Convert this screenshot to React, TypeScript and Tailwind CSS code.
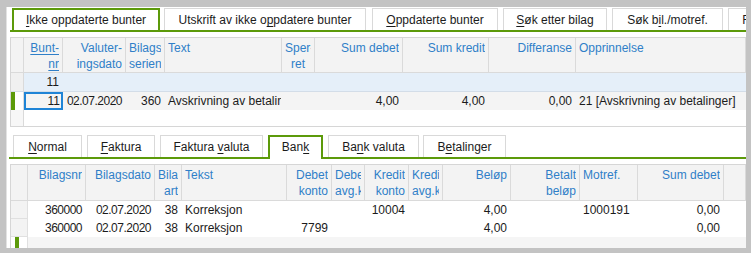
import React from 'react';

type Col = {
    w: string;
    head: string[];
    a: 'l' | 'r' | 'c';
    u?: boolean;
    tight?: boolean;
};

const alignCls = { l: 'text-left', r: 'text-right', c: 'text-center' };

const topCols: Col[] = [
    { w: 'w-[39px]', head: ['Bunt-', 'nr'], a: 'r', u: true },
    { w: 'w-[63px]', head: ['Valuter-', 'ingsdato'], a: 'r', tight: true },
    { w: 'w-[39px]', head: ['Bilags', 'serienr'], a: 'r' },
    { w: 'w-[117px]', head: ['Text'], a: 'l' },
    { w: 'w-[33px]', head: ['Sper-', 'ret'], a: 'c' },
    { w: 'w-[88px]', head: ['Sum debet'], a: 'r' },
    { w: 'w-[86px]', head: ['Sum kredit'], a: 'r' },
    { w: 'w-[87px]', head: ['Differanse'], a: 'r' },
    { w: 'flex-1', head: ['Opprinnelse'], a: 'l' },
];

const topRow = ['11', '02.07.2020', '360', 'Avskrivning av betalinger', '', '4,00', '4,00', '0,00', '21 [Avskrivning av betalinger]'];

const bankCols: Col[] = [
    { w: 'w-[58px]', head: ['Bilagsnr'], a: 'r', tight: true },
    { w: 'w-[69px]', head: ['Bilagsdato'], a: 'r', tight: true },
    { w: 'w-[27px]', head: ['Bilags', 'art'], a: 'r' },
    { w: 'w-[105px]', head: ['Tekst'], a: 'l' },
    { w: 'w-[45px]', head: ['Debet', 'konto'], a: 'r' },
    { w: 'w-[33px]', head: ['Debet', 'avg.kode'], a: 'r' },
    { w: 'w-[44px]', head: ['Kredit', 'konto'], a: 'r' },
    { w: 'w-[34px]', head: ['Kredit', 'avg.kode'], a: 'r' },
    { w: 'w-[68px]', head: ['Beløp'], a: 'r' },
    { w: 'w-[69px]', head: ['Betalt', 'beløp'], a: 'r' },
    { w: 'w-[58px]', head: ['Motref.'], a: 'l' },
    { w: 'w-[86px]', head: ['Sum debet'], a: 'r' },
    { w: 'flex-1', head: [''], a: 'l' },
];

const bankRows = [
    ['360000', '02.07.2020', '38', 'Korreksjon', '', '', '10004', '', '4,00', '', '1000191', '0,00', ''],
    ['360000', '02.07.2020', '38', 'Korreksjon', '7799', '', '', '', '4,00', '', '', '0,00', ''],
];

// hurtigtast-bokstav med understrek
const K = ({ children }: { children: React.ReactNode }) => <span className="underline underline-offset-2">{children}</span>;

const Tab = ({ w, ml, active, children }: { w: string; ml: string; active?: boolean; children: React.ReactNode }) =>
    active ? (
        <div className={`${w} ${ml} h-[24px] -mb-[2px] border-2 border-b-0 border-[#5c9a0a] bg-white pt-[2px] text-center leading-[16px] shrink-0 relative z-10`}>
            {children}
        </div>
    ) : (
        <div className={`${w} ${ml} h-[22px] border border-b-0 border-[#d9d9d9] bg-white pt-[3px] text-center leading-[16px] whitespace-nowrap shrink-0`}>
            {children}
        </div>
    );

const HeadCell = ({ col }: { col: Col }) => (
    <div className={`${col.w} h-full border-r border-[#dadada] px-[3px] pt-[2px] overflow-hidden ${alignCls[col.a]} shrink-0`}>
        {col.head.map((l, i) => (
            <div key={i} className={`leading-[16px] whitespace-nowrap overflow-hidden ${col.u ? 'underline underline-offset-2' : ''}`}>
                {l}
            </div>
        ))}
    </div>
);

const DataCell = ({ col, v }: { col: Col; v: string }) => (
    <div className={`${col.w} h-full border-r border-transparent px-[3px] overflow-hidden whitespace-nowrap ${alignCls[col.a]} ${col.tight ? 'tracking-[-0.5px]' : ''} shrink-0`}>
        {v}
    </div>
);

export default function App() {
    return (
        <div
            className="w-[751px] h-[253px] bg-[#c3c3c3] pt-[7px] pl-[6px] pr-[5px] pb-[5px] text-[12px] text-[#1b1b1b]"
            style={{ fontFamily: '"Liberation Sans", Arial, sans-serif' }}
        >
            <div className="h-full bg-white border-l border-[#e2e2e2] overflow-hidden flex flex-col">
                {/* fanerad øverst */}
                <div className="mt-[1px] ml-[3px] h-[24px] border-b-2 border-[#5c9a0a] flex items-end overflow-hidden shrink-0">
                    <Tab w="w-[148px]" ml="ml-[2px]" active><K>I</K>kke oppdaterte bunter</Tab>
                    <Tab w="w-[202px]" ml="ml-[4px]">Utskrift av ikke o<K>p</K>pdatere bunter</Tab>
                    <Tab w="w-[126px]" ml="ml-[6px]"><K>O</K>ppdaterte bunter</Tab>
                    <Tab w="w-[104px]" ml="ml-[5px]"><K>S</K>øk etter bilag</Tab>
                    <Tab w="w-[111px]" ml="ml-[5px]">Søk b<K>i</K>l./motref.</Tab>
                    <Tab w="w-[55px]" ml="ml-[5px]">Filtre</Tab>
                </div>

                {/* bunt-grid */}
                <div className="mt-[5px] ml-[3px] border-t border-l border-b border-[#d6d6d6] flex flex-col shrink-0 h-[90px]">
                    <div className="h-[35px] flex bg-[#f3f3f3] border-b border-[#dadada] text-[#2f7fc8] shrink-0">
                        <div className="w-[13px] h-full border-r border-[#dadada] shrink-0" />
                        {topCols.map((c, i) => <HeadCell key={i} col={c} />)}
                    </div>
                    <div className="h-[19px] flex bg-[#e5eff9] border-b border-[#d3dde8] leading-[18px] shrink-0">
                        <div className="w-[13px] h-full border-r border-[#dadada] bg-[#f0f0f0] shrink-0" />
                        {topCols.map((c, i) => <DataCell key={i} col={c} v={i === 0 ? '11' : ''} />)}
                    </div>
                    <div className="h-[18px] flex bg-[#f4f4f4] leading-[18px] shrink-0">
                        <div className="w-[13px] h-full border-r border-[#dadada] bg-white shrink-0 flex">
                            <div className="w-[4px] h-full bg-[#5c9a0a]" />
                        </div>
                        {topCols.map((c, i) =>
                            i === 0 ? (
                                <div key={i} className={`${c.w} h-full relative px-[3px] text-right shrink-0`}>
                                    11
                                    <div className="absolute inset-0 border-2 border-[#1f84d6]" />
                                </div>
                            ) : (
                                <DataCell key={i} col={c} v={topRow[i]} />
                            )
                        )}
                    </div>
                    <div className="flex-1 flex">
                        <div className="w-[13px] h-full border-r border-[#dadada] bg-[#f7f7f7]" />
                    </div>
                </div>

                {/* fanerad for bilagstype */}
                <div className="mt-[8px] ml-[2px] h-[24px] border-b-2 border-[#5c9a0a] flex items-end shrink-0">
                    <Tab w="w-[69px]" ml="ml-[4px]"><K>N</K>ormal</Tab>
                    <Tab w="w-[68px]" ml="ml-[5px]"><K>F</K>aktura</Tab>
                    <Tab w="w-[103px]" ml="ml-[5px]">Faktura <K>v</K>aluta</Tab>
                    <Tab w="w-[55px]" ml="ml-[5px]" active>Ban<K>k</K></Tab>
                    <Tab w="w-[91px]" ml="ml-[5px]">Ba<K>n</K>k valuta</Tab>
                    <Tab w="w-[83px]" ml="ml-[4px]">B<K>e</K>talinger</Tab>
                </div>

                {/* bilagsgrid */}
                <div className="mt-[5px] ml-[3px] border-t border-l border-[#d6d6d6] flex flex-col flex-1">
                    <div className="h-[36px] flex bg-[#f3f3f3] border-b border-[#dadada] text-[#2f7fc8] shrink-0">
                        <div className="w-[17px] h-full border-r border-[#dadada] shrink-0" />
                        {bankCols.map((c, i) => <HeadCell key={i} col={c} />)}
                    </div>
                    {bankRows.map((r, ri) => (
                        <div key={ri} className="h-[18px] flex leading-[18px] shrink-0">
                            <div className="w-[17px] h-full border-r border-b border-[#e0e0e0] bg-[#f3f3f3] shrink-0" />
                            {bankCols.map((c, i) => <DataCell key={i} col={c} v={r[i]} />)}
                        </div>
                    ))}
                    <div className="flex-1 flex bg-[#f5f5f5]">
                        <div className="w-[17px] h-full border-r border-[#e0e0e0] bg-white shrink-0 pl-[4px]">
                            <div className="w-[4px] h-full bg-[#5c9a0a]" />
                        </div>
                    </div>
                </div>
            </div>
        </div>
    );
}
